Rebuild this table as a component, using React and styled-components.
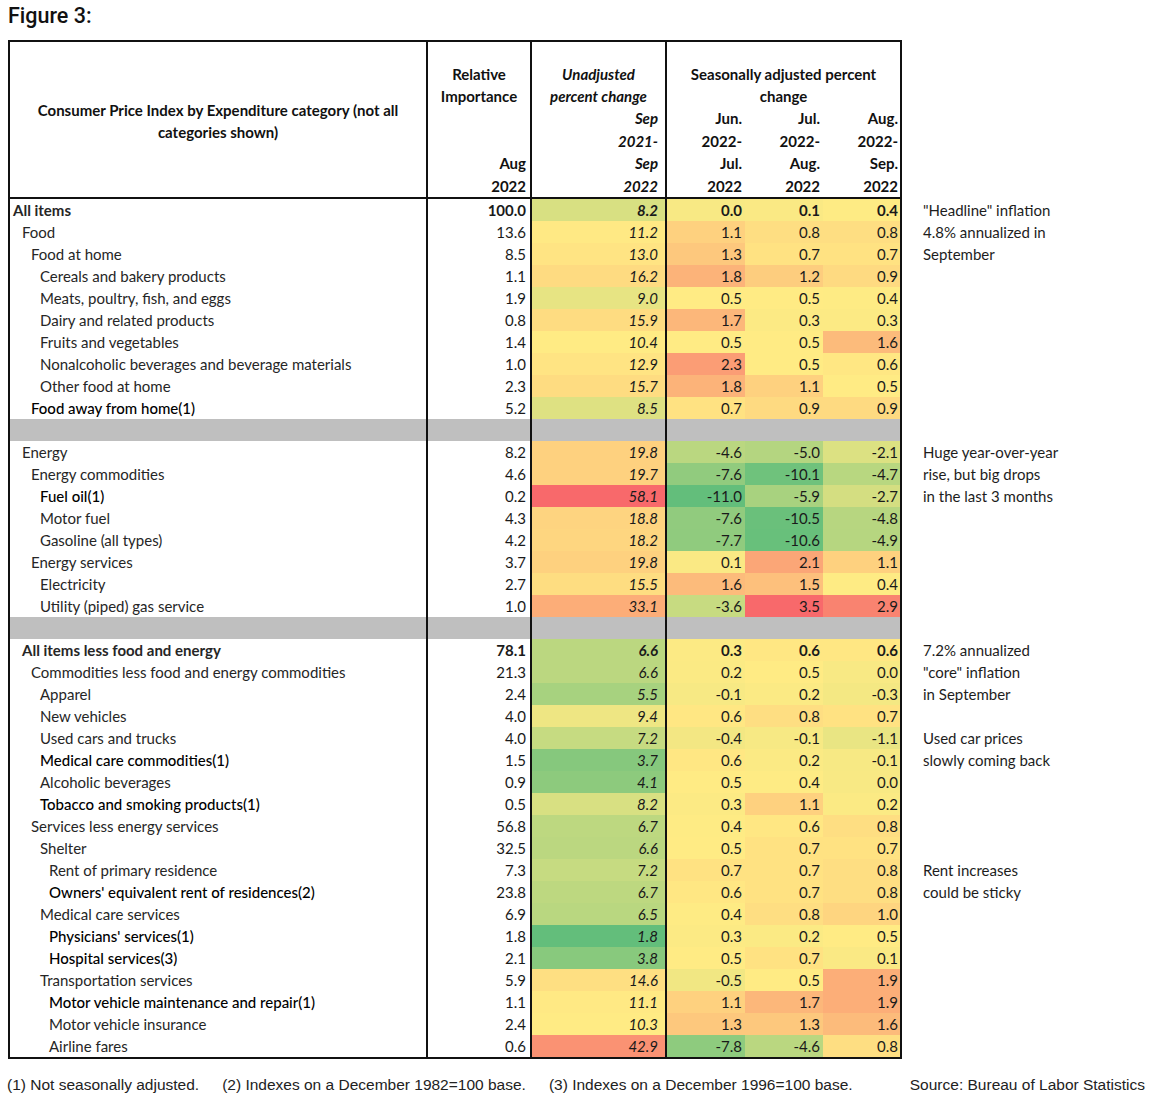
import React from 'react';
import styled, { createGlobalStyle } from 'styled-components';

const COLS = '418px 104px 135px 78px 78px 77px';
const LINE = '#111';

const GlobalStyle = createGlobalStyle`
  html, body { margin: 0; padding: 0; background: #fff; }
  body { font-family: Lato, "Noto Sans", sans-serif; color: #1d1d1d; }
`;

const Page = styled.div`
  width: 1152px;
  box-sizing: border-box;
  padding: 0 7px 0 8px;
`;

const Title = styled.h1`
  margin: 0;
  height: 40px;
  box-sizing: border-box;
  padding-top: 2px;
  font-family: Roboto, "Noto Sans", sans-serif;
  font-weight: 500;
  font-size: 21.5px;
  line-height: 28px;
  color: #111;
`;

const Main = styled.div`
  display: flex;
  align-items: flex-start;
`;

const Table = styled.div`
  width: 894px;
  box-sizing: border-box;
  border: 2px solid ${LINE};
  display: flex;
  flex-direction: column;
`;

const HeadGrid = styled.div`
  display: grid;
  grid-template-columns: ${COLS};
  grid-template-rows: 65px 92px;
  font-weight: 700;
  font-size: 15px;
  color: #111;
`;

const HeadTitle = styled.div`
  grid-row: 1 / span 2;
  display: flex;
  align-items: center;
  justify-content: center;
  text-align: center;
  line-height: 22px;
  padding-top: 2px;
  border-right: 2px solid ${LINE};
  border-bottom: 2px solid ${LINE};
`;

const HeadTop = styled.div`
  grid-column: span ${(p) => p.$span || 1};
  padding-top: 21px;
  text-align: center;
  line-height: 22px;
  font-style: ${(p) => (p.$italic ? 'italic' : 'normal')};
  border-right: ${(p) => (p.$divider ? `2px solid ${LINE}` : 'none')};
`;

const HeadSub = styled.div`
  display: flex;
  flex-direction: column;
  justify-content: flex-end;
  align-items: flex-end;
  padding-right: ${(p) => p.$pad || 3}px;
  line-height: 22.5px;
  font-style: ${(p) => (p.$italic ? 'italic' : 'normal')};
  border-right: ${(p) => (p.$divider ? `2px solid ${LINE}` : 'none')};
  border-bottom: 2px solid ${LINE};
`;

const Row = styled.div`
  display: grid;
  grid-template-columns: ${COLS};
  height: 22px;
  font-size: 15px;
  line-height: 22px;
  font-weight: ${(p) => (p.$bold ? 700 : 400)};
  background: ${(p) => (p.$gap ? '#bfbfbf' : 'transparent')};
`;

const Label = styled.div`
  padding-left: ${(p) => 3 + p.$level * 9}px;
  white-space: nowrap;
  color: ${(p) => (p.$dark ? '#000' : '#262626')};
  font-weight: ${(p) => (p.$dark ? 500 : 'inherit')};
  border-right: 2px solid ${LINE};
`;

const Num = styled.div`
  text-align: right;
  padding-right: ${(p) => p.$pad || 3}px;
  font-style: ${(p) => (p.$italic ? 'italic' : 'normal')};
  border-right: ${(p) => (p.$divider ? `2px solid ${LINE}` : 'none')};
  color: #1a1a1a;
`;

const Notes = styled.div`
  padding-top: 159px;
  padding-left: 21px;
  display: flex;
  flex-direction: column;
  font-size: 15px;
  color: #1d1d1d;
`;

const NoteLine = styled.div`
  height: 22px;
  line-height: 22px;
  white-space: nowrap;
`;

const Footer = styled.div`
  display: flex;
  gap: 23px;
  margin: 17px 0 0 -1px;
  font-family: "Liberation Sans", Arial, sans-serif;
  font-size: 15.5px;
  line-height: 18px;
  color: #222;
`;

const Source = styled.span`
  margin-left: auto;
`;

const rows = [
  { label: 'All items', level: 0, bold: true, ri: '100.0', ua: 8.2, s: [0.0, 0.1, 0.4], note: '"Headline" inflation' },
  { label: 'Food', level: 1, ri: '13.6', ua: 11.2, s: [1.1, 0.8, 0.8], note: '4.8% annualized in' },
  { label: 'Food at home', level: 2, ri: '8.5', ua: 13.0, s: [1.3, 0.7, 0.7], note: 'September' },
  { label: 'Cereals and bakery products', level: 3, ri: '1.1', ua: 16.2, s: [1.8, 1.2, 0.9] },
  { label: 'Meats, poultry, fish, and eggs', level: 3, ri: '1.9', ua: 9.0, s: [0.5, 0.5, 0.4] },
  { label: 'Dairy and related products', level: 3, ri: '0.8', ua: 15.9, s: [1.7, 0.3, 0.3] },
  { label: 'Fruits and vegetables', level: 3, ri: '1.4', ua: 10.4, s: [0.5, 0.5, 1.6] },
  { label: 'Nonalcoholic beverages and beverage materials', level: 3, ri: '1.0', ua: 12.9, s: [2.3, 0.5, 0.6] },
  { label: 'Other food at home', level: 3, ri: '2.3', ua: 15.7, s: [1.8, 1.1, 0.5] },
  { label: 'Food away from home(1)', level: 2, dark: true, ri: '5.2', ua: 8.5, s: [0.7, 0.9, 0.9] },
  { gap: true },
  { label: 'Energy', level: 1, ri: '8.2', ua: 19.8, s: [-4.6, -5.0, -2.1], note: 'Huge year-over-year' },
  { label: 'Energy commodities', level: 2, ri: '4.6', ua: 19.7, s: [-7.6, -10.1, -4.7], note: 'rise, but big drops' },
  { label: 'Fuel oil(1)', level: 3, dark: true, ri: '0.2', ua: 58.1, s: [-11.0, -5.9, -2.7], note: 'in the last 3 months' },
  { label: 'Motor fuel', level: 3, ri: '4.3', ua: 18.8, s: [-7.6, -10.5, -4.8] },
  { label: 'Gasoline (all types)', level: 3, ri: '4.2', ua: 18.2, s: [-7.7, -10.6, -4.9] },
  { label: 'Energy services', level: 2, ri: '3.7', ua: 19.8, s: [0.1, 2.1, 1.1] },
  { label: 'Electricity', level: 3, ri: '2.7', ua: 15.5, s: [1.6, 1.5, 0.4] },
  { label: 'Utility (piped) gas service', level: 3, ri: '1.0', ua: 33.1, s: [-3.6, 3.5, 2.9] },
  { gap: true },
  { label: 'All items less food and energy', level: 1, bold: true, ri: '78.1', ua: 6.6, s: [0.3, 0.6, 0.6], note: '7.2% annualized' },
  { label: 'Commodities less food and energy commodities', level: 2, ri: '21.3', ua: 6.6, s: [0.2, 0.5, 0.0], note: '"core" inflation' },
  { label: 'Apparel', level: 3, ri: '2.4', ua: 5.5, s: [-0.1, 0.2, -0.3], note: 'in September' },
  { label: 'New vehicles', level: 3, ri: '4.0', ua: 9.4, s: [0.6, 0.8, 0.7] },
  { label: 'Used cars and trucks', level: 3, ri: '4.0', ua: 7.2, s: [-0.4, -0.1, -1.1], note: 'Used car prices' },
  { label: 'Medical care commodities(1)', level: 3, dark: true, ri: '1.5', ua: 3.7, s: [0.6, 0.2, -0.1], note: 'slowly coming back' },
  { label: 'Alcoholic beverages', level: 3, ri: '0.9', ua: 4.1, s: [0.5, 0.4, 0.0] },
  { label: 'Tobacco and smoking products(1)', level: 3, dark: true, ri: '0.5', ua: 8.2, s: [0.3, 1.1, 0.2] },
  { label: 'Services less energy services', level: 2, ri: '56.8', ua: 6.7, s: [0.4, 0.6, 0.8] },
  { label: 'Shelter', level: 3, ri: '32.5', ua: 6.6, s: [0.5, 0.7, 0.7] },
  { label: 'Rent of primary residence', level: 4, ri: '7.3', ua: 7.2, s: [0.7, 0.7, 0.8], note: 'Rent increases' },
  { label: "Owners' equivalent rent of residences(2)", level: 4, dark: true, ri: '23.8', ua: 6.7, s: [0.6, 0.7, 0.8], note: 'could be sticky' },
  { label: 'Medical care services', level: 3, ri: '6.9', ua: 6.5, s: [0.4, 0.8, 1.0] },
  { label: "Physicians' services(1)", level: 4, dark: true, ri: '1.8', ua: 1.8, s: [0.3, 0.2, 0.5] },
  { label: 'Hospital services(3)', level: 4, dark: true, ri: '2.1', ua: 3.8, s: [0.5, 0.7, 0.1] },
  { label: 'Transportation services', level: 3, ri: '5.9', ua: 14.6, s: [-0.5, 0.5, 1.9] },
  { label: 'Motor vehicle maintenance and repair(1)', level: 4, dark: true, ri: '1.1', ua: 11.1, s: [1.1, 1.7, 1.9] },
  { label: 'Motor vehicle insurance', level: 4, ri: '2.4', ua: 10.3, s: [1.3, 1.3, 1.6] },
  { label: 'Airline fares', level: 4, ri: '0.6', ua: 42.9, s: [-7.8, -4.6, 0.8] },
];

// excel style 3-colour scale: min green, 50th percentile yellow, max red
const GREEN = [99, 190, 123];
const YELLOW = [255, 235, 132];
const RED = [248, 105, 107];

function makeScale(values) {
  const sorted = [...values].sort((a, b) => a - b);
  const n = sorted.length;
  const pos = (n - 1) * 0.5;
  const lo = Math.floor(pos);
  const mid = sorted[lo] + (sorted[Math.ceil(pos)] - sorted[lo]) * (pos - lo);
  const min = sorted[0];
  const max = sorted[n - 1];
  const mix = (a, b, t) => a.map((v, i) => Math.round(v + (b[i] - v) * t));
  return (v) => {
    const c = v <= mid
      ? mix(GREEN, YELLOW, (v - min) / (mid - min || 1))
      : mix(YELLOW, RED, (v - mid) / (max - mid || 1));
    return `rgb(${c[0]}, ${c[1]}, ${c[2]})`;
  };
}

const data = rows.filter((r) => !r.gap);
const uaColor = makeScale(data.map((r) => r.ua));
const saColor = makeScale(data.flatMap((r) => r.s));

function DataRow({ row }) {
  if (row.gap) {
    return (
      <Row $gap>
        <Label $level={0} />
        <Num $divider />
        <Num $divider />
        <Num />
        <Num />
        <Num />
      </Row>
    );
  }
  return (
    <Row $bold={row.bold}>
      <Label $level={row.level} $dark={row.dark}>{row.label}</Label>
      <Num $divider $pad={4}>{row.ri}</Num>
      <Num $divider $italic $pad={7} style={{ background: uaColor(row.ua) }}>{row.ua.toFixed(1)}</Num>
      {row.s.map((v, i) => (
        <Num key={i} $pad={i === 2 ? 2 : 3} style={{ background: saColor(v) }}>{v.toFixed(1)}</Num>
      ))}
    </Row>
  );
}

export default function App() {
  return (
    <>
      <GlobalStyle />
      <Page>
        <Title>Figure 3:</Title>
        <Main>
          <Table>
            <HeadGrid>
              <HeadTitle>
                Consumer Price Index by Expenditure category (not all<br />categories shown)
              </HeadTitle>
              <HeadTop $divider>Relative<br />Importance</HeadTop>
              <HeadTop $divider $italic>Unadjusted<br />percent change</HeadTop>
              <HeadTop $span={3}>Seasonally adjusted percent<br />change</HeadTop>
              <HeadSub $divider $pad={4}><span>Aug</span><span>2022</span></HeadSub>
              <HeadSub $divider $italic $pad={7}>
                <span>Sep</span><span>2021-</span><span>Sep</span><span>2022</span>
              </HeadSub>
              <HeadSub><span>Jun.</span><span>2022-</span><span>Jul.</span><span>2022</span></HeadSub>
              <HeadSub><span>Jul.</span><span>2022-</span><span>Aug.</span><span>2022</span></HeadSub>
              <HeadSub $pad={2}><span>Aug.</span><span>2022-</span><span>Sep.</span><span>2022</span></HeadSub>
            </HeadGrid>
            {rows.map((row, i) => (
              <DataRow key={i} row={row} />
            ))}
          </Table>
          <Notes>
            {rows.map((row, i) => (
              <NoteLine key={i}>{row.note || ''}</NoteLine>
            ))}
          </Notes>
        </Main>
        <Footer>
          <span>(1) Not seasonally adjusted.</span>
          <span>(2) Indexes on a December 1982=100 base.</span>
          <span>(3) Indexes on a December 1996=100 base.</span>
          <Source>Source: Bureau of Labor Statistics</Source>
        </Footer>
      </Page>
    </>
  );
}
